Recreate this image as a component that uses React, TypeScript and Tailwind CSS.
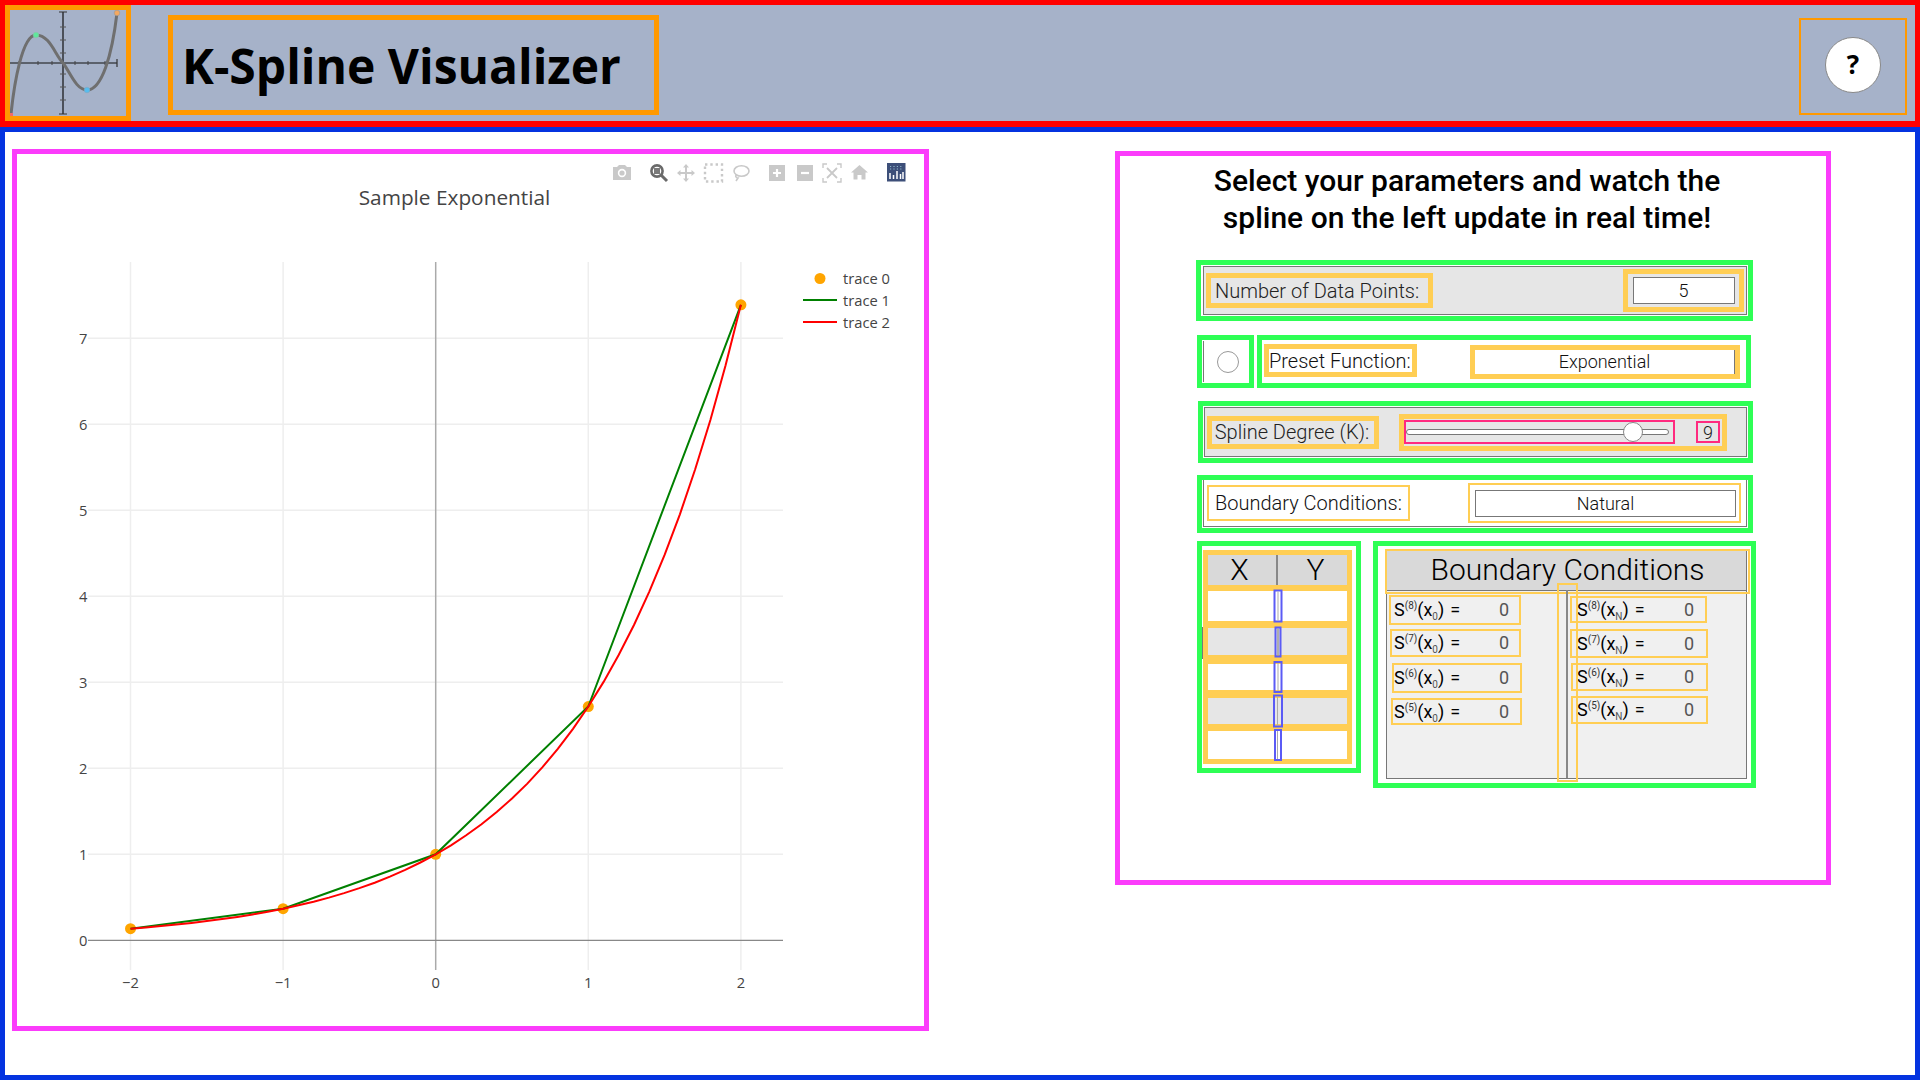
import React from "react";

const xp = (x: number) => 435.7 + x * 152.6;
const yp = (y: number) => 940.3 - y * 86;
const pts = [-2, -1, 0, 1, 2];
const redPts = Array.from({ length: 41 }, (_, i) => -2 + i * 0.1)
  .map((x) => `${xp(x).toFixed(1)},${yp(Math.exp(x)).toFixed(1)}`)
  .join(" ");
const greenPts = pts.map((x) => `${xp(x).toFixed(1)},${yp(Math.exp(x)).toFixed(1)}`).join(" ");

function Logo() {
  const xt = [19, 38, 52, 75, 88, 105];
  const yt = [27, 40, 53, 74, 87, 100];
  return (
    <svg viewBox="0 0 116 106" className="w-[116px] h-[106px] block">
      <g transform="translate(-10 -10)">
        <path d="M63 12V114M10 63H117" stroke="#111" strokeWidth="1.2" fill="none" />
        <path d="M59 12H67M59 114H67M117 59V67" stroke="#333" strokeWidth="1.2" fill="none" />
        {xt.map((x) => (
          <path key={x} d={`M${x} 61V65`} stroke="#444" strokeWidth="1" />
        ))}
        {yt.map((y) => (
          <path key={y} d={`M60 ${y}H66`} stroke="#555" strokeWidth="1" />
        ))}
        <path
          d="M11 114C14 85 22 35 36 35C50 35 55 55 63 63C70 72 76 90 87 90C102 90 112 55 117 13"
          fill="none"
          stroke="#6f6f6f"
          strokeWidth="3"
        />
        <circle cx="36" cy="35" r="2.8" fill="#5fe89c" stroke="#8fbfa8" strokeWidth="0.6" />
        <circle cx="87" cy="90" r="2.8" fill="#55bdf0" stroke="#7fa8c0" strokeWidth="0.6" />
        <circle cx="117" cy="13" r="2.8" fill="#f5a860" stroke="#999" strokeWidth="0.6" />
        <rect x="10" y="113" width="3" height="3" fill="#f26a6a" />
      </g>
    </svg>
  );
}

function ModeBar() {
  const c = "#c9c9c9";
  return (
    <g>
      {/* camera */}
      <path d="M613 167H617L619 165H625L627 167H631V180H613Z" fill={c} />
      <circle cx="622" cy="173" r="4.2" fill="#fff" />
      <circle cx="622" cy="173" r="2.6" fill={c} />
      {/* zoom */}
      <circle cx="657" cy="171" r="5.6" fill="none" stroke="#6a6a6a" strokeWidth="2.6" />
      <rect x="654" y="168" width="6" height="6" fill="#7a7a7a" />
      <path d="M661 175L667 181" stroke="#6a6a6a" strokeWidth="3" />
      {/* pan */}
      <path
        d="M686 164L689 167.500H687V172H691.500V170L695 173L691.500 176V174H687V178.500H689L686 182L683 178.500H685V174H680.500V176L677 173L680.500 170V172H685V167.500H683Z"
        fill={c}
      />
      {/* box select */}
      <rect x="705" y="164.500" width="17" height="17" fill="none" stroke={c} strokeWidth="2.4" strokeDasharray="2.4 2.9" />
      {/* lasso */}
      <ellipse cx="741.500" cy="171" rx="7.500" ry="5.300" fill="none" stroke={c} strokeWidth="1.6" />
      <path d="M736 175C735 177 737 178 738 178L736 181" fill="none" stroke={c} strokeWidth="1.6" />
      {/* zoom in */}
      <rect x="769" y="165" width="16" height="16" fill={c} />
      <path d="M777 169V177M773 173H781" stroke="#fff" strokeWidth="2.2" />
      {/* zoom out */}
      <rect x="797" y="165" width="16" height="16" fill={c} />
      <path d="M801 173H809" stroke="#fff" strokeWidth="2.2" />
      {/* autoscale */}
      <path
        d="M823 168V164H827M837 164H841V168M841 178V182H837M827 182H823V178"
        fill="none"
        stroke={c}
        strokeWidth="1.400"
      />
      <path d="M827 168L837 178M837 168L827 178" stroke={c} strokeWidth="1.800" />
      {/* home */}
      <path d="M851 172.500L859.500 165L868 172.500H865.500V179.500H861.500V175H857.500V179.500H853.500V172.500Z" fill={c} />
      {/* logo */}
      <rect x="887" y="163" width="18.500" height="18.500" fill="#3d4f79" />
      <path d="M890 173V179M893.500 175V179M897 171V179M900.500 174V179M903 172V179" stroke="#fff" strokeWidth="1.500" />
      <path d="M890 166.500H903.500M890 169H903.500" stroke="#8fb5c9" strokeWidth="1" strokeDasharray="1.200 2.200" />
    </g>
  );
}

function Chart() {
  const font = { fontFamily: '"Open Sans", "Noto Sans", sans-serif' };
  return (
    <svg viewBox="17 154 907 872" className="w-[907px] h-[872px] block">
      <ModeBar />
      <text x="454.500" y="204.500" textAnchor="middle" fontSize="20.8" fill="#444" style={font}>
        Sample Exponential
      </text>
      {[-2, -1, 1, 2].map((x) => (
        <path key={x} d={`M${xp(x)} 262V970`} stroke="#eeeeee" strokeWidth="1.500" />
      ))}
      {[1, 2, 3, 4, 5, 6, 7].map((y) => (
        <path key={y} d={`M88 ${yp(y)}H783`} stroke="#eeeeee" strokeWidth="1.500" />
      ))}
      <path d={`M${xp(0)} 262V970`} stroke="#aaaaaa" strokeWidth="1.500" />
      <path d={`M88 ${yp(0)}H783`} stroke="#888888" strokeWidth="1.200" />
      {[-2, -1, 0, 1, 2].map((x) => (
        <text key={x} x={xp(x)} y="987.500" textAnchor="middle" fontSize="14.7" fill="#444" style={font}>
          {x < 0 ? `\u2212${-x}` : x}
        </text>
      ))}
      {[0, 1, 2, 3, 4, 5, 6, 7].map((y) => (
        <text key={y} x="87.500" y={yp(y) + 6} textAnchor="end" fontSize="14.7" fill="#444" style={font}>
          {y}
        </text>
      ))}
      {pts.map((x) => (
        <circle key={x} cx={xp(x)} cy={yp(Math.exp(x))} r="5.500" fill="#ffa500" />
      ))}
      <polyline points={greenPts} fill="none" stroke="#008000" strokeWidth="2" />
      <polyline points={redPts} fill="none" stroke="#ff0000" strokeWidth="2" />
      <circle cx="820" cy="278.500" r="5.500" fill="#ffa500" />
      <path d="M803 300H837" stroke="#008000" strokeWidth="2" />
      <path d="M803 322H837" stroke="#ff0000" strokeWidth="2" />
      {["trace 0", "trace 1", "trace 2"].map((t, i) => (
        <text key={t} x="843" y={284 + i * 21.8} fontSize="14.7" fill="#444" style={font}>
          {t}
        </text>
      ))}
    </svg>
  );
}

function Deriv({
  order,
  sub,
  w,
  h,
  ml,
  mt,
  pl,
  lw,
}: {
  order: number;
  sub: string;
  w: number;
  h: number;
  ml: number;
  mt: number;
  pl: number;
  lw: number;
}) {
  return (
    <div
      className="flex items-center border-[2px] border-[#ffce54] text-[18px] leading-none text-black font-[Roboto,sans-serif] whitespace-nowrap"
      style={{ width: w, height: h, marginLeft: ml, marginTop: mt, paddingLeft: pl }}
    >
      <span className="flex items-center shrink-0" style={{ width: lw }}>
        <span>S</span>
        <span className="text-[10px] -translate-y-[4px] text-[#333]">({order})</span>
        <span>(x</span>
        <span className="text-[10px] translate-y-[7px] text-[#555]">{sub}</span>
        <span>)</span>
        <span className="ml-[6px]">=</span>
      </span>
      <span className="text-[#555]">0</span>
    </div>
  );
}

const tableRows = [
  { h: 30, mt: 6, gray: false, cw: 9, ch: 33, line: false },
  { h: 27, mt: 7, gray: true, cw: 7, ch: 31, line: true },
  { h: 26, mt: 9, gray: false, cw: 9, ch: 32, line: false },
  { h: 26, mt: 8, gray: true, cw: 10, ch: 33, line: false },
  { h: 28, mt: 7, gray: false, cw: 8, ch: 32, line: false },
];

export default function App() {
  const roboto = "font-[Roboto,sans-serif]";
  return (
    <div className={`w-[1920px] h-[1080px] flex flex-col bg-white overflow-hidden ${roboto}`}>
      {/* Header */}
      <header className="h-[127px] shrink-0 border-[5px] border-b-[6px] border-[#ff0000] bg-[#a6b2c9] flex items-start">
        <div className="w-[126px] h-[116px] border-[5px] border-[#ff9900]">
          <Logo />
        </div>
        <div className="ml-[37px] mt-[10px] w-[491px] h-[100px] border-[5px] border-[#ff9900] flex items-center pl-[9px] pt-[2px]">
          <h1 className="text-[48px] font-bold text-black leading-none font-['Open_Sans',sans-serif] whitespace-nowrap">
            K-Spline Visualizer
          </h1>
        </div>
        <div className="ml-auto mr-[8px] mt-[13px] w-[108px] h-[97px] border-[2px] border-[#ff9900] flex items-center justify-center pb-[4px]">
          <div className="w-[56px] h-[56px] rounded-full bg-white border border-[#888] flex items-center justify-center text-[26px] font-bold text-black font-['Open_Sans',sans-serif]">
            ?
          </div>
        </div>
      </header>

      {/* Main */}
      <main className="flex-1 border-[5px] border-[#0433e0] flex items-start bg-white">
        <section className="ml-[7px] mt-[17px] w-[917px] h-[882px] border-[5px] border-[#fb3cfb] bg-white">
          <Chart />
        </section>

        <section className="ml-[186px] mt-[19px] w-[716px] h-[734px] border-[5px] border-[#fb3cfb] bg-white">
          <h2 className="mt-[6px] pr-[12px] text-center text-[30px] leading-[37px] font-medium text-black">
            Select your parameters and watch the
            <br />
            spline on the left update in real time!
          </h2>

          <div className="ml-[76px] mt-[24px] w-[560px]">
            {/* Row 1 */}
            <div className="w-[557px] h-[61px] border-[5px] border-[#2eff55] pl-[2px] pr-[1px] py-[1px]">
              <div className="h-full border border-[#777] bg-[#e6e6e6] flex items-center">
                <div className="ml-[2px] h-[35px] w-[227px] border-[5px] border-[#ffce54] pl-[4px] flex items-center text-[20px] font-light text-[#222] whitespace-nowrap">
                  Number of Data Points:
                </div>
                <div className="ml-auto mr-[2px] h-[43px] w-[121px] border-[5px] border-[#ffce54] flex items-center justify-center">
                  <div className="w-[102px] h-[27px] border border-[#777] bg-white flex items-center justify-center text-[18px] font-[350] text-[#111]">
                    5
                  </div>
                </div>
              </div>
            </div>

            {/* Row 2 */}
            <div className="mt-[14px] ml-[1px] flex gap-[3px]">
              <div className="w-[57px] h-[53px] border-[5px] border-[#2eff55] pl-[1px] py-[1px]">
                <div className="h-full border-l border-[#777] flex items-center justify-center pl-[2px]">
                  <div className="w-[22px] h-[22px] rounded-full border-[1.500px] border-[#999] bg-white" />
                </div>
              </div>
              <div className="w-[494px] h-[53px] border-[5px] border-[#2eff55] flex items-center">
                <div className="ml-[2px] -translate-y-[1px] h-[33px] w-[153px] border-[5px] border-[#ffce54] flex items-center text-[20px] font-light text-[#111] whitespace-nowrap">
                  Preset Function:
                </div>
                <div className="ml-[53px] h-[34px] w-[270px] border-[5px] border-[#ffce54] flex items-center justify-center">
                  <div className="w-full h-full border-r border-[#777] bg-white flex items-center justify-center text-[18px] font-[350] text-[#111]">
                    Exponential
                  </div>
                </div>
              </div>
            </div>

            {/* Row 3 */}
            <div className="mt-[13px] ml-[2px] w-[555px] h-[62px] border-[5px] border-[#2eff55] pl-[1px] pr-[1px] py-[1px]">
              <div className="h-full border border-[#777] bg-[#e6e6e6] flex items-center">
                <div className="ml-[2px] h-[33px] w-[172px] border-[5px] border-[#ffce54] pr-[2px] flex items-center justify-center text-[20px] font-light text-[#222] whitespace-nowrap">
                  Spline Degree (K):
                </div>
                <div className="ml-[20px] h-[37px] w-[328px] border-[5px] border-[#ffce54] flex items-center">
                  <div className="w-[271px] h-[24px] border-[2px] border-[#ff2a7f] flex items-center relative">
                    <div className="w-[263px] h-[6px] rounded-full border border-[#777] bg-white" />
                    <div className="absolute left-[217px] top-[0px] w-[20px] h-[20px] rounded-full border border-[#888] bg-white" />
                  </div>
                  <div className="ml-[21px] w-[24px] h-[22px] border-[2px] border-[#ff2a7f] flex items-center justify-center text-[18px] font-[350] text-[#222]">
                    9
                  </div>
                </div>
              </div>
            </div>

            {/* Row 4 */}
            <div className="mt-[12px] ml-[1px] w-[556px] h-[58px] border-[5px] border-[#2eff55] pl-[1px] pr-[1px] pb-[1px]">
              <div className="h-full border-l border-b border-r border-[#777] flex items-center">
                <div className="ml-[3px] h-[36px] w-[203px] border-[2px] border-[#ffce54] pl-[6px] flex items-center text-[20px] font-light text-[#111] whitespace-nowrap">
                  Boundary Conditions:
                </div>
                <div className="ml-[58px] h-[40px] w-[273px] border-[2px] border-[#ffce54] flex items-center pl-[5px]">
                  <div className="w-[261px] h-[27px] border border-[#777] bg-white flex items-center justify-center text-[18px] font-[350] text-[#111]">
                    Natural
                  </div>
                </div>
              </div>
            </div>

            {/* Tables */}
            <div className="mt-[8px] ml-[1px] flex items-start gap-[12px] w-[570px]">
              <div className="w-[164px] h-[232px] shrink-0 border-[5px] border-[#2eff55] pl-[1px] pt-[4px]">
                <div className="w-[149px] h-[214px] border-[5px] border-[#ffce54] bg-[#ffce54] relative">
                  <div className="h-[30px] bg-[#d9d9d9] flex text-[30px] leading-[30px] text-black font-light">
                    <div className="w-[70px] pr-[5px] text-center border-r-[2px] border-[#888]">X</div>
                    <div className="flex-1 pl-[6px] text-center">Y</div>
                  </div>
                  {tableRows.map((r, i) => (
                    <div
                      key={i}
                      className={`relative ${r.gray ? "bg-[#e6e6e6]" : "bg-white"}`}
                      style={{ height: r.h, marginTop: r.mt }}
                    >
                      <div
                        className="absolute left-1/2 top-1/2 -translate-x-1/2 -translate-y-1/2 border-[2px] border-[#5b5bf5] flex justify-center"
                        style={{ width: r.cw, height: r.ch }}
                      >
                        <div className={`w-[1px] h-full ${r.line ? "bg-[#777]" : "bg-[#aaa]"}`} />
                      </div>
                    </div>
                  ))}
                  <div className="absolute left-[-6px] top-[72px] w-[1px] h-[32px] bg-[#777]" />
                </div>
              </div>

              <div className="w-[383px] h-[247px] shrink-0 border-[5px] border-[#2eff55] pl-[8px] pt-[4px]">
                <div className="w-[361px] h-[229px] border border-[#777] bg-[#f0f0f0] relative">
                  <div className="h-[40px] pl-[2px] bg-[#d9d9d9] border-b border-[#777] text-center text-[30px] font-[350] leading-[38px] text-black">
                    Boundary Conditions
                  </div>
                  <div className="absolute left-[-2px] top-[-2px] w-[365px] h-[45px] border-[2px] border-[#ffce54]" />
                  <div className="absolute left-[179px] top-[39px] bottom-0 w-[2px] bg-[#888]" />
                  <div className="absolute left-[170px] top-[32px] w-[21px] h-[199px] border-[2px] border-[#ffce54]" />
                  <div className="flex">
                    <div className="w-[183px]">
                      <Deriv order={8} sub="0" w={132} h={30} ml={2} mt={4} pl={3} lw={105} />
                      <Deriv order={7} sub="0" w={131} h={28} ml={3} mt={4} pl={2} lw={105} />
                      <Deriv order={6} sub="0" w={130} h={30} ml={5} mt={6} pl={0} lw={105} />
                      <Deriv order={5} sub="0" w={131} h={27} ml={4} mt={5} pl={1} lw={105} />
                    </div>
                    <div>
                      <Deriv order={8} sub="N" w={137} h={27} ml={0} mt={5} pl={5} lw={107} />
                      <Deriv order={7} sub="N" w={138} h={29} ml={0} mt={6} pl={5} lw={107} />
                      <Deriv order={6} sub="N" w={137} h={28} ml={1} mt={5} pl={4} lw={107} />
                      <Deriv order={5} sub="N" w={137} h={28} ml={1} mt={5} pl={4} lw={107} />
                    </div>
                  </div>
                </div>
              </div>
            </div>
          </div>
        </section>
      </main>
    </div>
  );
}
